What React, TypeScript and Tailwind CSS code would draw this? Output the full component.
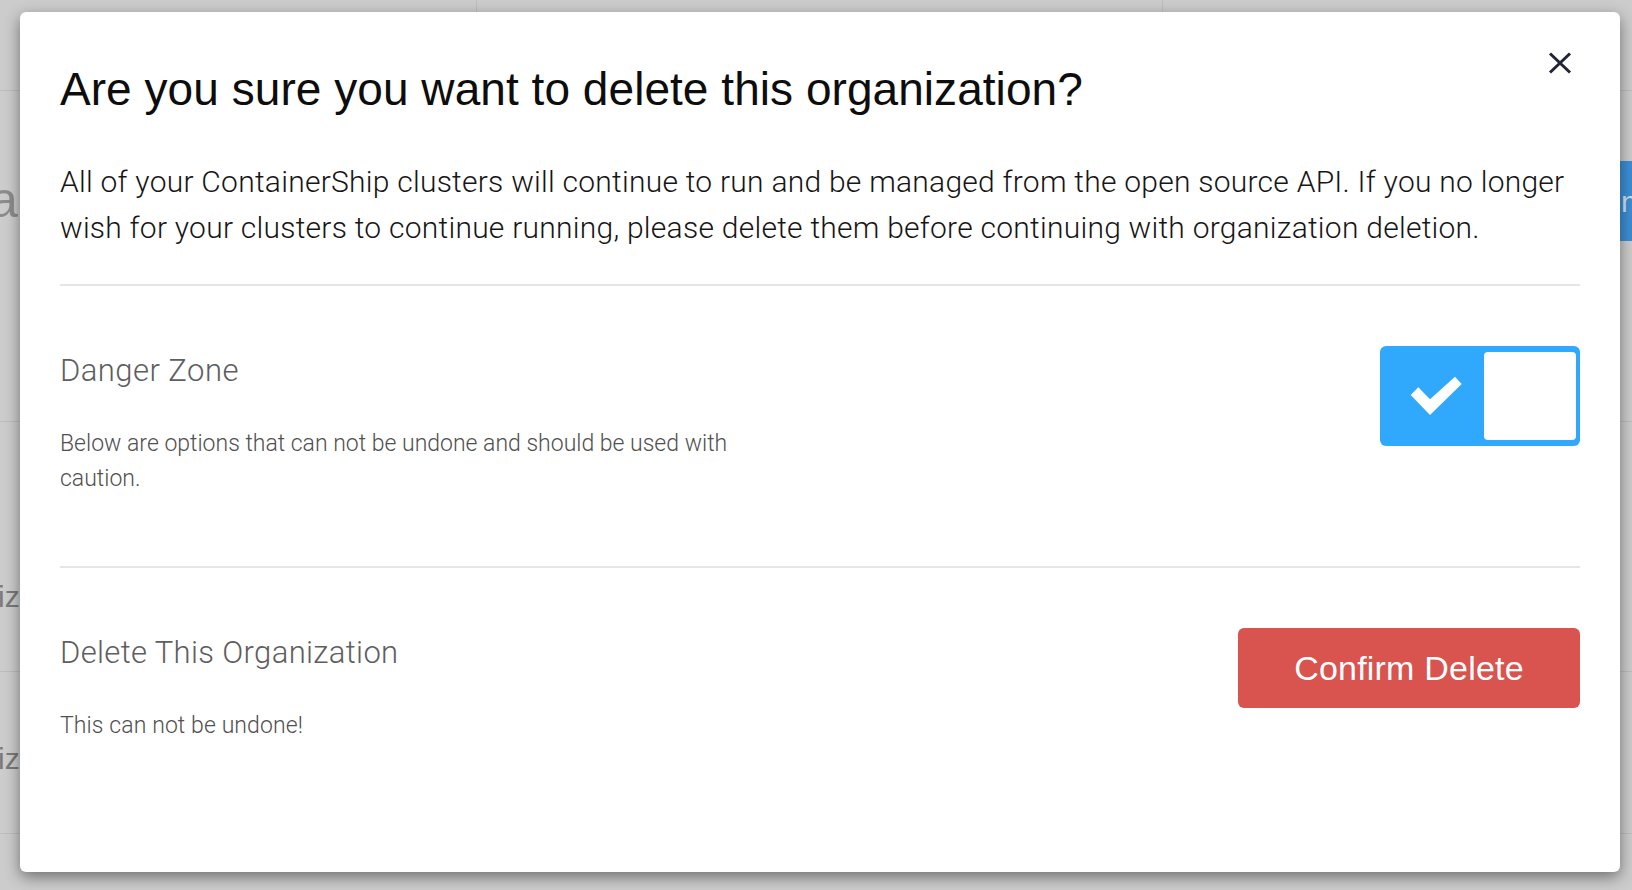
import React from "react";

function Toggle() {
  return (
    <div className="mt-[60px] flex h-[100px] w-[200px] shrink-0 rounded-[6px] bg-[#30a8fc] py-[6px] pr-[4px]">
      <div className="flex-1">
        <svg width="104" height="88" viewBox="0 0 104 88">
          <polygon
            points="38.3,35.3 50,47.3 75,24.7 81.7,32 50,63 30.7,43"
            fill="#ffffff"
          />
        </svg>
      </div>
      <div className="w-[92px] rounded-[4px] bg-white" />
    </div>
  );
}

export default function App() {
  return (
    <div className="relative h-[890px] w-[1632px] overflow-hidden bg-[#cccccc]">
      {/* dimmed page behind the modal */}
      <div className="absolute inset-0 flex flex-col font-[family-name:'Liberation_Sans',Arial,sans-serif]">
        <div className="flex h-[91px] shrink-0 border-b border-[#bdbdbd]">
          <div className="w-[477px] border-r border-[#bdbdbd]" />
          <div className="w-[686px] border-r border-[#bdbdbd]" />
          <div className="flex-1" />
        </div>
        <div className="flex h-[331px] shrink-0 justify-between border-b border-[#bdbdbd]">
          <span className="-ml-[10px] pt-[84px] text-[50px] leading-[50px] text-[#8c8c8c]">a</span>
          <div className="mt-[70px] flex h-[80px] w-[40px] items-center bg-[#3d8ed4] pl-[29px] text-[30px] text-[#cfe3f5]">
            n
          </div>
        </div>
        <div className="h-[250px] shrink-0 border-b border-[#bdbdbd] pt-[160px]">
          <span className="-ml-[2px] text-[30px] leading-[30px] text-[#7a7a7a]">iz</span>
        </div>
        <div className="h-[162px] shrink-0 border-b border-[#bdbdbd] pt-[72px]">
          <span className="-ml-[2px] text-[30px] leading-[30px] text-[#7a7a7a]">iz</span>
        </div>
        <div className="flex-1" />
      </div>

      {/* modal */}
      <div className="absolute left-[20px] top-[12px] h-[860px] w-[1600px] rounded-[6px] bg-white px-[40px] pt-[50px] shadow-[0_5px_15px_rgba(0,0,0,0.45)]">
        <button className="absolute right-[48px] top-[40px] h-[22px] w-[24px]" aria-label="Close">
          <svg width="24" height="22" viewBox="0 0 24 22">
            <path d="M2 1.5 L22 20.5 M22 1.5 L2 20.5" stroke="#1f2536" strokeWidth="3" fill="none" />
          </svg>
        </button>

        <h1 className="font-[family-name:'Liberation_Sans',Arial,sans-serif] text-[46px] font-normal leading-[55px] tracking-[0.05px] text-[#0d0d0d]">
          Are you sure you want to delete this organization?
        </h1>

        <p className="mt-[42px] font-[family-name:Roboto,sans-serif] text-[30px] font-light leading-[46px] tracking-[0.25px] text-[#161616]">
          All of your ContainerShip clusters will continue to run and be managed from the open source API. If you no longer wish for your clusters to continue running, please delete them before continuing with organization deletion.
        </p>

        <div className="mt-[33px] h-[2px] bg-[#e6e6e6]" />

        <div className="flex items-start justify-between font-[family-name:Roboto,sans-serif]">
          <div className="w-[700px] pb-[70px] pt-[67px]">
            <h2 className="text-[31px] font-light leading-[36px] tracking-[0.45px] text-[#5e5e5e]">Danger Zone</h2>
            <p className="mt-[37px] text-[23px] font-light leading-[35px] tracking-[0px] text-[#505050]">
              Below are options that can not be undone and should be used with caution.
            </p>
          </div>
          <Toggle />
        </div>

        <div className="h-[2px] bg-[#e6e6e6]" />

        <div className="flex items-start justify-between font-[family-name:Roboto,sans-serif]">
          <div className="pt-[67px]">
            <h2 className="text-[31px] font-light leading-[36px] tracking-[0.35px] text-[#5e5e5e]">Delete This Organization</h2>
            <p className="mt-[37px] text-[23px] font-light leading-[35px] tracking-[0.1px] text-[#505050]">This can not be undone!</p>
          </div>
          <button className="mt-[60px] flex h-[80px] w-[342px] items-center justify-center rounded-[6px] bg-[#d9534f] font-[family-name:'Liberation_Sans',Arial,sans-serif] text-[34px] tracking-[0.2px] text-white">
            Confirm Delete
          </button>
        </div>
      </div>
    </div>
  );
}
